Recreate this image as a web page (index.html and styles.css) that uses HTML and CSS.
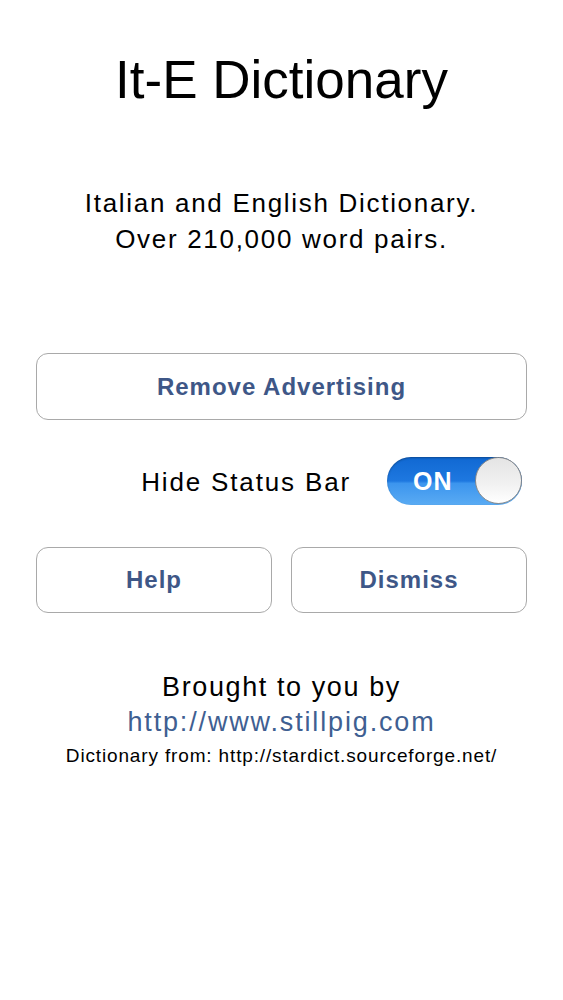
FILE: index.html
```html
<!DOCTYPE html>
<html>
<head>
<meta charset="utf-8">
<link rel="stylesheet" href="styles.css">
</head>
<body>
<div class="page">
  <h1 class="title">It-E Dictionary</h1>
  <p class="subtitle">Italian and English Dictionary.<br>Over 210,000 word pairs.</p>
  <div class="btn btn-wide">Remove Advertising</div>
  <div class="toggle-row">
    <span class="toggle-label">Hide Status Bar</span>
    <div class="switch">
      <span class="switch-text">ON</span>
      <span class="knob"></span>
    </div>
  </div>
  <div class="btn-row">
    <div class="btn">Help</div>
    <div class="btn">Dismiss</div>
  </div>
  <div class="credits">
    <div class="credit-line">Brought to you by</div>
    <div class="credit-link">http://www.stillpig.com</div>
    <div class="credit-small">Dictionary from: http://stardict.sourceforge.net/</div>
  </div>
</div>
</body>
</html>
```

FILE: styles.css
```css
html, body {
  margin: 0;
  padding: 0;
  background: #ffffff;
}
body {
  font-family: "Liberation Sans", Arial, sans-serif;
  color: #000;
}
.page {
  padding: 0 36px;
}
.title {
  margin: 48px 0 0;
  font-size: 53px;
  line-height: 64px;
  font-weight: normal;
  text-align: center;
}
.subtitle {
  margin: 73px 0 0;
  font-size: 26px;
  line-height: 36px;
  letter-spacing: 1.7px;
  text-align: center;
}
.btn {
  box-sizing: border-box;
  height: 67px;
  border: 1.5px solid #a9a9a9;
  border-radius: 12px;
  display: flex;
  align-items: center;
  justify-content: center;
  font-size: 24px;
  font-weight: bold;
  letter-spacing: 1px;
  color: #3e5787;
  background: #fff;
}
.btn-wide {
  margin-top: 96px;
}
.toggle-row {
  margin-top: 37px;
  height: 48px;
  display: flex;
  align-items: center;
  justify-content: flex-end;
  gap: 36px;
  padding-right: 5px;
}
.toggle-label {
  font-size: 26px;
  line-height: 48px;
  letter-spacing: 1.85px;
  padding-top: 2px;
}
.switch {
  position: relative;
  width: 135px;
  height: 48px;
  border-radius: 24px;
  background: linear-gradient(to bottom, #1068d2 0%, #1e78e0 50%, #3c95ee 55%, #5aabf3 100%);
  box-shadow: inset 0 1px 2px rgba(0,0,0,0.3);
  box-sizing: border-box;
}
.switch-text {
  position: absolute;
  left: 26px;
  top: 0;
  line-height: 48px;
  font-size: 25px;
  font-weight: bold;
  letter-spacing: 1px;
  color: #fff;
}
.knob {
  position: absolute;
  right: 0;
  top: 0;
  width: 47px;
  height: 47px;
  box-sizing: border-box;
  border-radius: 50%;
  border: 1.5px solid #8a8a8a;
  background: linear-gradient(to bottom, #e4e4e4 0%, #f2f2f2 60%, #ffffff 100%);
}
.btn-row {
  margin-top: 42px;
  display: grid;
  grid-template-columns: 1fr 1fr;
  gap: 19px;
}
.btn-row .btn {
  height: 66px;
}
.credits {
  margin-top: 57px;
  text-align: center;
}
.credit-line {
  font-size: 27px;
  line-height: 35px;
  letter-spacing: 1.6px;
}
.credit-link {
  font-size: 27px;
  line-height: 35px;
  letter-spacing: 1.85px;
  color: #3f5f92;
}
.credit-small {
  margin-top: 3px;
  font-size: 19px;
  line-height: 26px;
  letter-spacing: 0.85px;
}
```
